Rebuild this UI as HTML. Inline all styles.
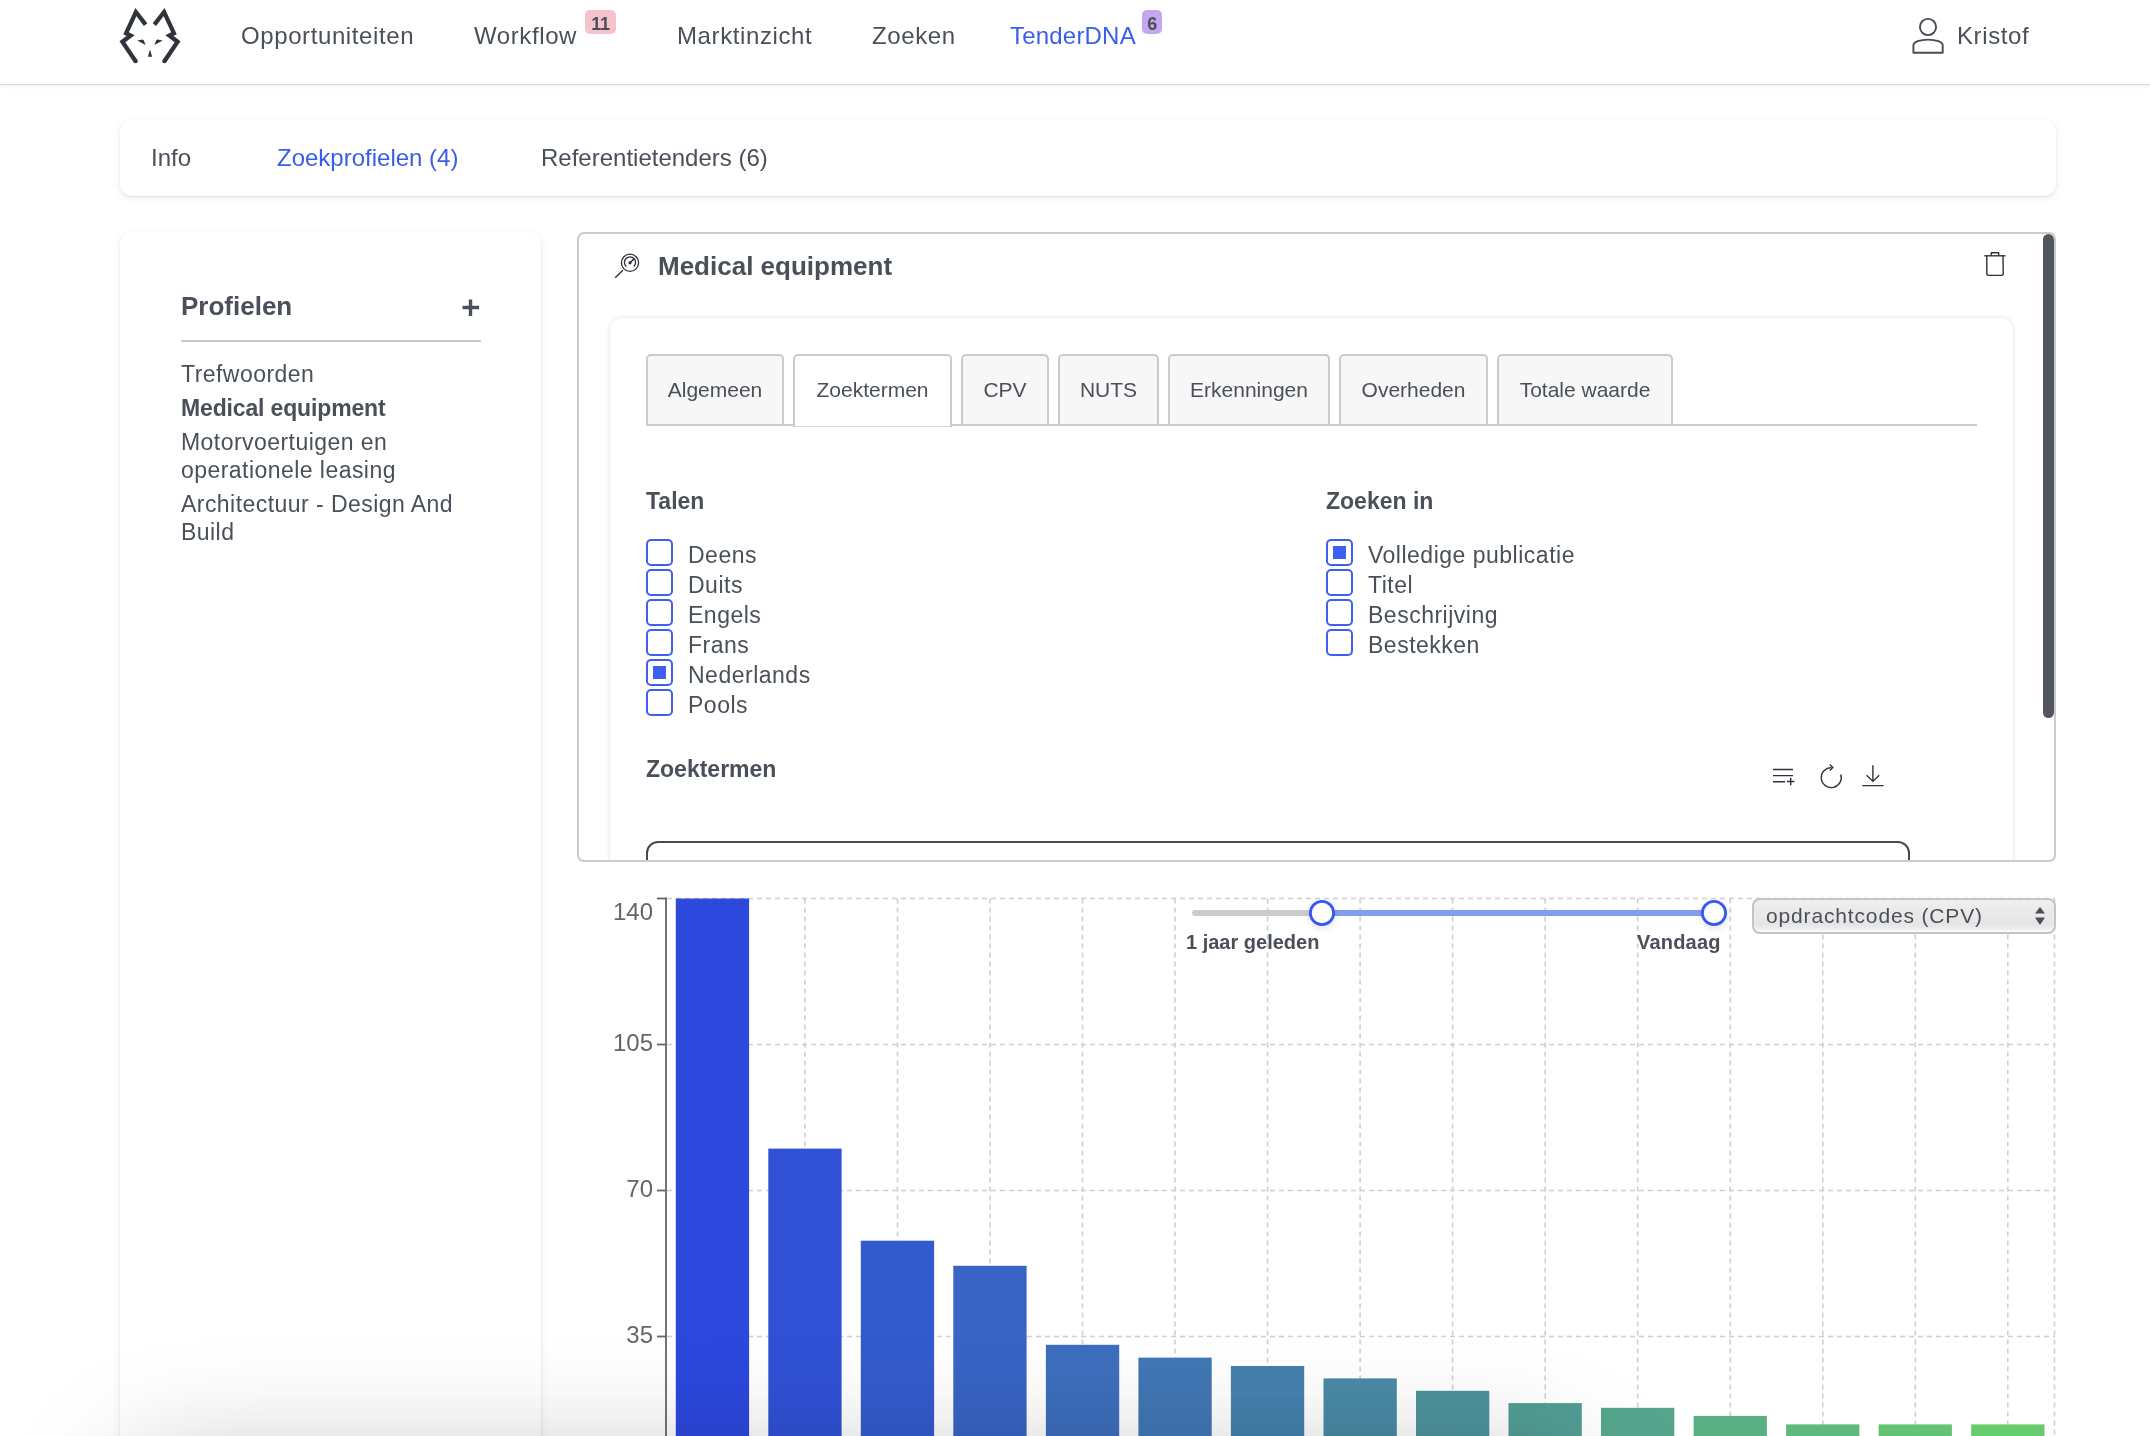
<!DOCTYPE html>
<html><head><meta charset="utf-8">
<style>
*{box-sizing:border-box;margin:0;padding:0}
html,body{width:2150px;height:1436px;overflow:hidden;background:#fff}
body{font-family:"Liberation Sans",sans-serif;color:#4a5059;position:relative}
.abs{position:absolute;white-space:nowrap}
.hdr{position:absolute;left:0;top:0;width:2150px;height:84px;background:#fff;box-shadow:0 1px 1px rgba(0,0,0,0.10),0 2px 5px rgba(0,0,0,0.07);z-index:5}
.nav{position:absolute;top:21px;font-size:24px;line-height:30px;color:#4a5059;letter-spacing:0.6px}
.badge{position:absolute;top:10px;height:24px;border-radius:5px;font-size:18px;line-height:28px;font-weight:bold;text-align:center;color:#4a5059;letter-spacing:-0.3px}
.card{position:absolute;background:#fff;border-radius:12px;box-shadow:0 1px 2px rgba(0,0,0,0.09),0 2px 8px rgba(0,0,0,0.07)}
.side{font-size:23px;line-height:28px;color:#4a5059;letter-spacing:0.45px}
.ptab{position:absolute;top:354px;height:71px;border:2px solid #cbcbcb;border-bottom:none;border-radius:5px 5px 0 0;background:#f7f7f7;font-size:21px;line-height:68px;text-align:center;color:#4a5059}
.ptab.act{background:#fff;height:73px;z-index:1}
.h3{font-size:23px;line-height:30px;font-weight:bold;color:#4a5059;letter-spacing:0px}
.cb{position:absolute;width:27px;height:27px;border:2px solid #3f5ff2;border-radius:5px;background:#fff}
.cb.on::after{content:"";position:absolute;left:5px;top:5px;width:13px;height:13px;background:#3f5ff2}
.cbl{position:absolute;white-space:nowrap;font-size:23px;line-height:30px;color:#4a5059;letter-spacing:0.5px}
.tab{position:absolute;top:143px;font-size:24px;line-height:30px}
</style></head>
<body><div id="wrap" style="position:absolute;left:0;top:0;width:2150px;height:1436px;will-change:transform;background:#fff">
<div class="hdr">
  <svg class="abs" style="left:118px;top:6px" width="64" height="60" viewBox="118 6 64 60">
    <g fill="none" stroke="#2f343b" stroke-width="4.3" stroke-linejoin="miter" stroke-linecap="butt">
      <polyline points="145.6,24.6 135.9,12 126.1,33.2 130.6,35.5 122.4,41.7 135.6,61.2"/>
      <polyline points="154.4,24.6 164.1,12 173.9,33.2 169.4,35.5 177.6,41.7 164.4,61.2"/>
    </g>
    <g fill="#2f343b">
      <circle cx="135.6" cy="61.2" r="2.15"/><circle cx="164.4" cy="61.2" r="2.15"/>
      <polygon points="137.3,40.4 142.4,39.4 143.7,40.2 145.6,44.9"/>
      <polygon points="162.7,40.4 157.6,39.4 156.3,40.2 154.4,44.9"/>
      <polygon points="150,49.6 147.9,56.7 152.1,56.7"/>
    </g>
  </svg>
  <div class="nav abs" style="left:241px">Opportuniteiten</div>
  <div class="nav abs" style="left:474px">Workflow</div>
  <div class="badge abs" style="left:585px;width:31px;background:#f6c2cc">11</div>
  <div class="nav abs" style="left:677px">Marktinzicht</div>
  <div class="nav abs" style="left:872px">Zoeken</div>
  <div class="nav abs" style="left:1010px;color:#3a5ee8;letter-spacing:0.2px">TenderDNA</div>
  <div class="badge abs" style="left:1142px;width:20px;background:#c4a8ef">6</div>
  <svg class="abs" style="left:1900px;top:10px" width="60" height="50" viewBox="1900 10 60 50">
    <g fill="none" stroke="#474c55" stroke-width="1.9" stroke-linejoin="round">
      <circle cx="1928" cy="27" r="8.1"/>
      <path d="M1913.4 52.8 V45.5 C1913.4 42 1920 39.6 1928 39.6 C1936 39.6 1942.7 42 1942.7 45.5 V52.8 Z"/>
    </g>
  </svg>
  <div class="nav abs" style="left:1957px;top:21px">Kristof</div>
</div>

<div class="card" style="left:120px;top:120px;width:1936px;height:76px"></div>
<div class="tab abs" style="left:151px">Info</div>
<div class="tab abs" style="left:277px;color:#3a5ee8">Zoekprofielen (4)</div>
<div class="tab abs" style="left:541px">Referentietenders (6)</div>


<!-- left sidebar card -->
<div class="card" style="left:120px;top:232px;width:421px;height:1400px"></div>
<div class="abs" style="left:181px;top:290px;font-size:26px;line-height:32px;font-weight:bold;color:#4a5059">Profielen</div>
<svg class="abs" style="left:461px;top:298px" width="19" height="19" viewBox="0 0 19 19"><path d="M9.5 1.5V18M1.5 9.5H18" stroke="#4a5059" stroke-width="3.4"/></svg>
<div class="abs" style="left:181px;top:340px;width:300px;height:2px;background:#c9c9c9"></div>
<div class="abs side" style="left:181px;top:360px">Trefwoorden</div>
<div class="abs side" style="left:181px;top:394px;font-weight:bold;letter-spacing:-0.15px">Medical equipment</div>
<div class="abs side" style="left:181px;top:428px">Motorvoertuigen en</div>
<div class="abs side" style="left:181px;top:456px">operationele leasing</div>
<div class="abs side" style="left:181px;top:490px">Architectuur - Design And</div>
<div class="abs side" style="left:181px;top:518px">Build</div>

<!-- main profile card -->
<div class="abs" id="main" style="left:577px;top:232px;width:1479px;height:630px;border:2px solid #cbcbcb;border-radius:7px;overflow:hidden;background:#fff;white-space:normal">
<div style="position:absolute;left:-579px;top:-234px;width:2150px;height:1436px">
  <svg class="abs" style="left:612px;top:251px" width="30" height="30" viewBox="612 251 30 30">
    <g fill="none" stroke="#2d3139" stroke-width="1.3">
      <circle cx="630" cy="262.8" r="8.6"/>
      <path d="M626.3 266.6 A5.6 5.6 0 1 1 633.7 266.6"/>
      <path d="M630 262.8 L634.2 258.7" stroke-width="1.6"/>
      <path d="M622.9 270.2 L615.2 277.7" stroke-width="1.4"/>
    </g>
    <circle cx="630" cy="262.8" r="1.6" fill="#2d3139"/>
  </svg>
  <div class="abs" style="left:658px;top:250px;font-size:26px;line-height:32px;font-weight:bold;color:#4a5059">Medical equipment</div>
  <svg class="abs" style="left:1982px;top:250px" width="26" height="28" viewBox="1982 250 26 28">
    <g fill="none" stroke="#2d3139" stroke-width="1.4" stroke-linejoin="round">
      <path d="M1984.3 255.8 H2005.5"/>
      <path d="M1991.3 255.6 V252.8 H1998.7 V255.6"/>
      <path d="M1986.8 256 V273.6 Q1986.8 275.4 1988.6 275.4 H2001.4 Q2003.2 275.4 2003.2 273.6 L2003 256"/>
    </g>
  </svg>
  <div class="abs" style="left:2043px;top:234px;width:11px;height:484px;border-radius:6px;background:#51565f"></div>

  <div class="abs" style="left:610px;top:318px;width:1403px;height:700px;border-radius:12px;background:#fff;box-shadow:0 0 4px rgba(0,0,0,0.14)"></div>
  
  <div class="ptab" style="left:646px;width:138px">Algemeen</div>
  <div class="ptab act" style="left:793px;width:159px">Zoektermen</div>
  <div class="ptab" style="left:961px;width:88px">CPV</div>
  <div class="ptab" style="left:1058px;width:101px">NUTS</div>
  <div class="ptab" style="left:1168px;width:162px">Erkenningen</div>
  <div class="ptab" style="left:1339px;width:149px">Overheden</div>
  <div class="ptab" style="left:1497px;width:176px">Totale waarde</div>
  <div class="abs" style="left:646px;top:424px;width:1331px;height:2px;background:#cdcdcd"></div>
  <div class="abs" style="left:795px;top:424px;width:155px;height:2px;background:#fff;z-index:2"></div>
  <div class="abs" style="left:795px;top:426px;width:155px;height:1px;background:#d6d6d6;z-index:2"></div>

  <div class="abs h3" style="left:646px;top:486px">Talen</div>
  <div class="abs h3" style="left:1326px;top:486px">Zoeken in</div>
  <div class="cb" style="left:646px;top:539px"></div><div class="cbl" style="left:688px;top:540px">Deens</div>
  <div class="cb" style="left:646px;top:569px"></div><div class="cbl" style="left:688px;top:570px">Duits</div>
  <div class="cb" style="left:646px;top:599px"></div><div class="cbl" style="left:688px;top:600px">Engels</div>
  <div class="cb" style="left:646px;top:629px"></div><div class="cbl" style="left:688px;top:630px">Frans</div>
  <div class="cb on" style="left:646px;top:659px"></div><div class="cbl" style="left:688px;top:660px">Nederlands</div>
  <div class="cb" style="left:646px;top:689px"></div><div class="cbl" style="left:688px;top:690px">Pools</div>
  <div class="cb on" style="left:1326px;top:539px"></div><div class="cbl" style="left:1368px;top:540px">Volledige publicatie</div>
  <div class="cb" style="left:1326px;top:569px"></div><div class="cbl" style="left:1368px;top:570px">Titel</div>
  <div class="cb" style="left:1326px;top:599px"></div><div class="cbl" style="left:1368px;top:600px">Beschrijving</div>
  <div class="cb" style="left:1326px;top:629px"></div><div class="cbl" style="left:1368px;top:630px">Bestekken</div>

  <div class="abs h3" style="left:646px;top:754px">Zoektermen</div>
  <svg class="abs" style="left:1764px;top:758px" width="130" height="36" viewBox="1764 758 130 36">
    <g fill="none" stroke="#2d3139" stroke-width="1.4">
      <path d="M1773 769.5H1793M1773 775.6H1793M1773 781.7H1785M1787 781.5H1794.5M1790.7 777.8V785.2"/>
      <path d="M1831.5 767.6 A10 10 0 1 0 1840.8 774.5"/>
      <path d="M1829.8 764.6 L1832.8 767.6 L1829.8 770.6"/>
      <path d="M1872.9 765.3V781.4M1866.6 775.3L1872.9 781.4L1879.2 775.3M1862.3 785.6H1883.5"/>
    </g>
  </svg>
  <div class="abs" style="left:646px;top:841px;width:1264px;height:60px;border:2px solid #464b53;border-radius:12px"></div>
</div>
</div>

<svg class="abs" style="left:0;top:0" width="2150" height="1436" viewBox="0 0 2150 1436">
<g stroke="#cfcfcf" stroke-width="1.6" stroke-dasharray="5 4" fill="none">
<path d="M667 898.5H2055"/>
<path d="M667 1044.5H2055"/>
<path d="M667 1190.5H2055"/>
<path d="M667 1336.5H2055"/>
<path d="M712.4 898.5V1436"/>
<path d="M804.9 898.5V1436"/>
<path d="M897.5 898.5V1436"/>
<path d="M990.0 898.5V1436"/>
<path d="M1082.5 898.5V1436"/>
<path d="M1175.0 898.5V1436"/>
<path d="M1267.6 898.5V1436"/>
<path d="M1360.1 898.5V1436"/>
<path d="M1452.6 898.5V1436"/>
<path d="M1545.2 898.5V1436"/>
<path d="M1637.7 898.5V1436"/>
<path d="M1730.2 898.5V1436"/>
<path d="M1822.8 898.5V1436"/>
<path d="M1915.3 898.5V1436"/>
<path d="M2007.8 898.5V1436"/>
<path d="M2054.5 898.5V1436"/>
</g>
<rect x="675.8" y="898.5" width="73.3" height="541.5" fill="#2c48dd"/>
<rect x="768.3" y="1148.6" width="73.3" height="291.4" fill="#3051d5"/>
<rect x="860.8" y="1240.7" width="73.3" height="199.3" fill="#345bcd"/>
<rect x="953.3" y="1265.8" width="73.3" height="174.2" fill="#3964c5"/>
<rect x="1045.9" y="1344.8" width="73.3" height="95.2" fill="#3d6ebd"/>
<rect x="1138.4" y="1357.6" width="73.3" height="82.4" fill="#4177b5"/>
<rect x="1230.9" y="1366" width="73.3" height="74.0" fill="#4581ad"/>
<rect x="1323.5" y="1378.4" width="73.3" height="61.6" fill="#4a8aa5"/>
<rect x="1416.0" y="1390.8" width="73.3" height="49.2" fill="#4e939d"/>
<rect x="1508.5" y="1403.1" width="73.3" height="36.9" fill="#529d95"/>
<rect x="1601.0" y="1407.8" width="73.3" height="32.2" fill="#56a68d"/>
<rect x="1693.6" y="1415.9" width="73.3" height="24.1" fill="#5ab085"/>
<rect x="1786.1" y="1424.4" width="73.3" height="15.6" fill="#5fb97d"/>
<rect x="1878.6" y="1424.4" width="73.3" height="15.6" fill="#63c375"/>
<rect x="1971.2" y="1424.4" width="73.3" height="15.6" fill="#67cc6d"/>
<g stroke="#666" stroke-width="1.8" fill="none">
<path d="M666 897.6V1436"/>
<path d="M657 898.5H666"/>
<path d="M657 1044.5H666"/>
<path d="M657 1190.5H666"/>
<path d="M657 1336.5H666"/>
</g>
<g font-family="Liberation Sans" font-size="24" fill="#666" text-anchor="end">
<text x="653" y="920">140</text>
<text x="653" y="1051.0">105</text>
<text x="653" y="1197.0">70</text>
<text x="653" y="1343.0">35</text>
</g>
<path d="M1195 913H1322" stroke="#cbcbcb" stroke-width="6" stroke-linecap="round"/>
<path d="M1322 913H1714" stroke="#839eee" stroke-width="6"/>
<circle cx="1322" cy="913" r="11.6" fill="#fff" stroke="#3457f5" stroke-width="2.8" style="filter:drop-shadow(0 2px 3px rgba(0,0,0,0.12))"/>
<circle cx="1714" cy="913" r="11.6" fill="#fff" stroke="#3457f5" stroke-width="2.8" style="filter:drop-shadow(0 2px 3px rgba(0,0,0,0.12))"/>
</svg>
<div class="abs" style="left:1186px;top:929px;font-size:20px;line-height:26px;font-weight:bold;color:#4a5059">1 jaar geleden</div>
<div class="abs" style="left:1637px;top:929px;font-size:20px;line-height:26px;font-weight:bold;color:#4a5059;letter-spacing:0.2px">Vandaag</div>
<div class="abs" style="left:1752px;top:898px;width:304px;height:36px;border:2px solid #c4c4c4;border-radius:8px;background:linear-gradient(#efefef,#e5e5e5 75%,#f3f3f3);box-shadow:inset 0 -2px 2px rgba(255,255,255,0.6)"></div>
<div class="abs" style="left:1766px;top:902px;font-size:21px;line-height:27px;color:#4a5059;letter-spacing:0.85px">opdrachtcodes (CPV)</div>
<svg class="abs" style="left:2030px;top:903px" width="20" height="26" viewBox="0 0 20 26"><path d="M5 10.5L10 4L15 10.5Z M5 14.5L10 22L15 14.5Z" fill="#4a5059"/></svg>
<div class="abs" style="left:130px;top:1475px;width:1440px;height:100px;border-radius:50px;box-shadow:0 0 120px 12px rgba(0,0,0,0.26);z-index:10"></div>

</div></body></html>
